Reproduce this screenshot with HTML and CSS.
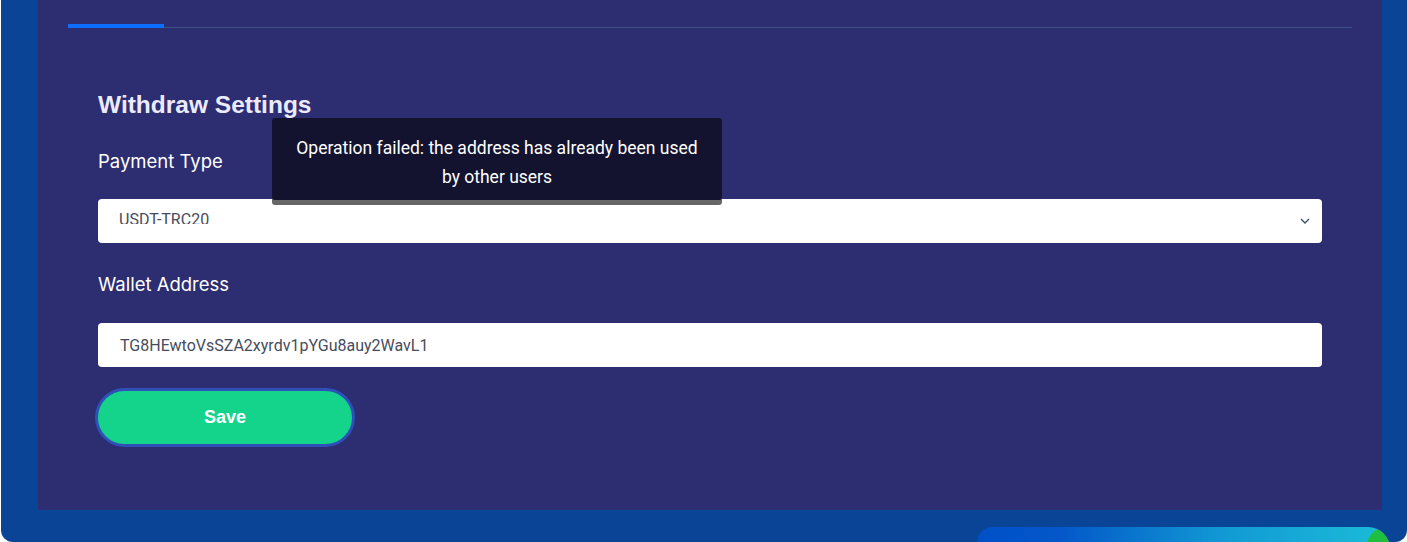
FILE: index.html
```html
<!DOCTYPE html>
<html>
<head>
<meta charset="utf-8">
<link rel="stylesheet" href="styles.css">
</head>
<body>
<div class="shell">
  <div class="panel">
    <div class="tabs">
      <div class="tab active">Profile</div>
      <div class="tab">Security</div>
    </div>
    <div class="content">
      <h2 class="title">Withdraw Settings</h2>
      <div class="label">Payment Type</div>
      <div class="select">
        <span class="select-text">USDT-TRC20</span>
        <svg class="chev" width="10" height="6" viewBox="0 0 10 6"><path d="M1 1l4 4 4-4" fill="none" stroke="#3d4f6e" stroke-width="1.4"/></svg>
      </div>
      <div class="label">Wallet Address</div>
      <div class="input">TG8HEwtoVsSZA2xyrdv1pYGu8auy2WavL1</div>
      <button class="save">Save</button>
    </div>
  </div>
</div>
<div class="toast">Operation failed: the address has already been used<br>by other users</div>
<div class="float-bar"><span class="float-dot"></span></div>
</body>
</html>
```
FILE: styles.css
```css
html, body {
  margin: 0;
  padding: 0;
  background: #ffffff;
  overflow: hidden;
  height: 542px;
}
.shell {
  margin-left: 1px;
  margin-top: -40px;
  width: 1406px;
  box-sizing: border-box;
  padding: 0 25px 0 37px;
  background: #0a4496;
  border-radius: 0 0 12px 12px;
  height: 582px;
}
.panel {
  background: #2d2d71;
  padding: 0 30px 63px;
}
.tabs {
  display: flex;
  gap: 40px;
  height: 68px;
  border-bottom: 1px solid #3b4f82;
  box-sizing: border-box;
  font-family: Roboto, sans-serif;
  font-size: 18px;
  color: #ffffff;
}
.tab {
  width: 96px;
  padding-top: 10px;
  text-align: center;
  box-sizing: border-box;
  position: relative;
}
.tab.active::after {
  content: "";
  position: absolute;
  left: 0;
  right: 0;
  bottom: -1px;
  height: 4px;
  background: #0d6efd;
}
.content {
  padding: 62px 30px 0;
}
.title {
  margin: 0;
  font-family: "Liberation Sans", Arial, sans-serif;
  font-weight: 700;
  font-size: 24.5px;
  line-height: 30px;
  color: #ebebff;
}
.label {
  margin-top: 30px;
  font-family: Inter, Roboto, sans-serif;
  font-size: 18.5px;
  line-height: 22px;
  color: #ffffff;
}
.select, .input {
  margin-top: 27px;
  height: 44px;
  background: #ffffff;
  border-radius: 4px;
  box-sizing: border-box;
  font-family: Roboto, sans-serif;
  font-size: 16px;
  color: #474c5c;
  display: flex;
  align-items: center;
}
.select {
  justify-content: space-between;
  padding: 0 12px 0 21px;
}
.select-text {
  display: block;
  align-self: flex-start;
  margin-top: 12px;
  height: 13px;
  line-height: 18px;
  overflow: hidden;
}
.input {
  margin-top: 28px;
  padding-left: 22px;
}
.save {
  margin-top: 21px;
  margin-left: -3px;
  width: 260px;
  height: 59px;
  border: 3px solid #2e50b8;
  border-radius: 30px;
  background: #14d38a;
  color: #ffffff;
  font-family: "Liberation Sans", Arial, sans-serif;
  font-weight: 700;
  font-size: 18px;
  display: block;
}
.toast {
  position: absolute;
  left: 272px;
  top: 118px;
  width: 450px;
  height: 82px;
  box-sizing: border-box;
  padding-top: 16px;
  background: #14132f;
  border-radius: 3px;
  box-shadow: 0 5px 0 #676767;
  color: #ffffff;
  font-family: Roboto, sans-serif;
  font-size: 17.5px;
  line-height: 29px;
  text-align: center;
}
.float-bar {
  position: absolute;
  left: 977px;
  top: 527px;
  width: 413px;
  height: 40px;
  border-radius: 16px 22px 0 0;
  background: linear-gradient(90deg, #0050c8 0%, #0457c9 20%, #129ad4 60%, #1ab8d8 95%);
  overflow: hidden;
}
.float-dot {
  position: absolute;
  right: -16px;
  top: 0;
  width: 40px;
  height: 44px;
  border-radius: 50%;
  background: #1fbe3f;
}
```
